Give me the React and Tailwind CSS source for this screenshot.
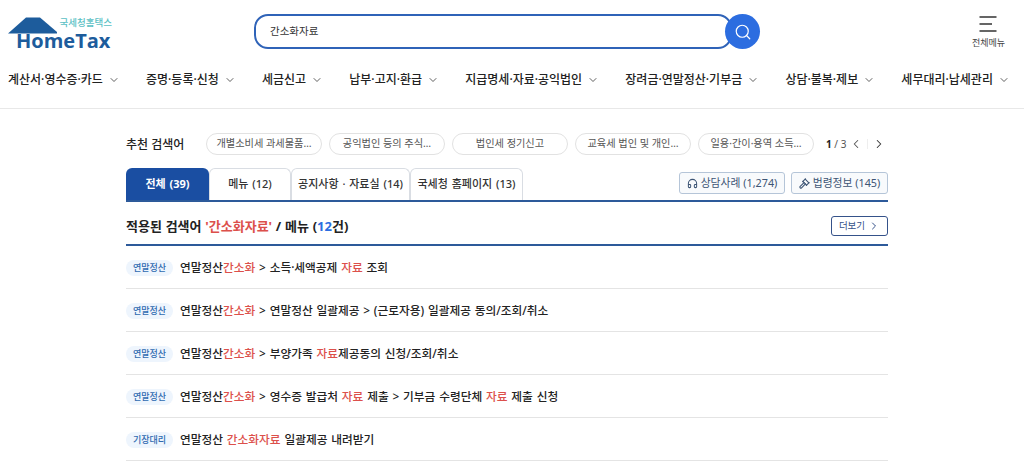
import React from "react";
import { ChevronDown, ChevronLeft, ChevronRight, Headphones, Gavel, Search } from "lucide-react";

const navItems = [
  "계산서·영수증·카드",
  "증명·등록·신청",
  "세금신고",
  "납부·고지·환급",
  "지급명세·자료·공익법인",
  "장려금·연말정산·기부금",
  "상담·불복·제보",
  "세무대리·납세관리",
];

const pills = [
  "개별소비세 과세물품…",
  "공익법인 등의 주식…",
  "법인세 정기신고",
  "교육세 법인 및 개인…",
  "일용·간이·용역 소득…",
];

const tabs = [
  { label: "전체 (39)", w: "w-[83px]", active: true },
  { label: "메뉴 (12)", w: "w-[82px]" },
  { label: "공지사항 · 자료실 (14)", w: "w-[119px]" },
  { label: "국세청 홈페이지 (13)", w: "w-[113px]" },
];

const R = ({ children }) => <span className="text-[#dc504b]">{children}</span>;

const rows = [
  { tag: "연말정산", body: <>연말정산<R>간소화</R> &gt; 소득·세액공제 <R>자료</R> 조회</> },
  { tag: "연말정산", body: <>연말정산<R>간소화</R> &gt; 연말정산 일괄제공 &gt; (근로자용) 일괄제공 동의/조회/취소</> },
  { tag: "연말정산", body: <>연말정산<R>간소화</R> &gt; 부양가족 <R>자료</R>제공동의 신청/조회/취소</> },
  { tag: "연말정산", body: <>연말정산<R>간소화</R> &gt; 영수증 발급처 <R>자료</R> 제출 &gt; 기부금 수령단체 <R>자료</R> 제출 신청</> },
  { tag: "기장대리", body: <>연말정산 <R>간소화자료</R> 일괄제공 내려받기</> },
];

function Logo() {
  return (
    <div className="relative w-[104px] h-[36px]">
      <svg className="absolute left-0 top-0" width="58" height="24" viewBox="0 0 58 24">
        <path d="M0 16.5 L18 0.5 H32 L49 15 V16.5 Z" fill="#1d5c9c" />
      </svg>
      <span className="absolute right-0 top-[0px] text-[9.5px] leading-[12px] font-medium text-[#5bbfc4]">국세청홈택스</span>
      <span className="absolute left-[8px] top-[12px] text-[20px] leading-[23px] font-bold text-[#1d5c9c] font-['Open_Sans',sans-serif]">HomeTax</span>
    </div>
  );
}

export default function App() {
  return (
    <div className="w-[1024px] h-[471px] overflow-hidden bg-white text-[#222] font-['Noto_Sans','Noto_Sans_CJK_KR',sans-serif]">
      <header className="h-[109px] border-b border-[#e8e8e8]">
        <div className="flex items-start h-[62px]">
          <div className="pl-[8px] pt-[17px] w-[254px]">
            <Logo />
          </div>
          <div className="mt-[14px] flex items-center">
            <div className="w-[478px] h-[35px] border-[2px] border-[#2f63b8] rounded-[14px] flex items-center pl-[14px] pt-[1px] text-[10.5px] text-[#333]">
              간소화자료
            </div>
            <button className="w-[35px] h-[35px] -ml-[7px] rounded-full bg-[#2c6de0] flex items-center justify-center">
              <Search size={18} color="#fff" strokeWidth={1.6} />
            </button>
          </div>
          <div className="ml-auto mr-[19px] pt-[16px] flex flex-col items-center">
            <svg width="18" height="16" viewBox="0 0 18 16">
              <path d="M0.5 1H17.5M0.5 8H13M0.5 15H17.5" stroke="#333" strokeWidth="1.3" fill="none" />
            </svg>
            <span className="mt-[5px] text-[9px] leading-[12px] text-[#444]">전체메뉴</span>
          </div>
        </div>
        <nav className="flex justify-between items-center pl-[8px] pr-[14px] h-[36px]">
          {navItems.map((item) => (
            <div key={item} className="flex items-center gap-[5px] text-[12px] font-medium text-[#222]">
              {item}
              <ChevronDown size={12} color="#444" strokeWidth={1.7} />
            </div>
          ))}
        </nav>
      </header>

      <main className="w-[762px] ml-[126px]">
        <div className="flex items-center h-[22px] mt-[24px]">
          <span className="w-[80px] pt-[1px] text-[12px] font-medium text-[#222]">추천 검색어</span>
          <div className="flex gap-[7px]">
            {pills.map((p) => (
              <div key={p} className="w-[116px] h-[22px] rounded-full border border-[#e2e2e2] flex items-center justify-center text-[10.2px] text-[#555]">
                {p}
              </div>
            ))}
          </div>
          <span className="ml-[12px] text-[10px] text-[#555]"><b className="font-bold text-[#222]">1</b> / 3</span>
          <ChevronLeft className="ml-[3px]" size={14} color="#555" strokeWidth={1.8} />
          <span className="mx-[4px] w-px h-[10px] bg-[#eee]" />
          <ChevronRight size={14} color="#333" strokeWidth={1.8} />
        </div>

        <div className="flex items-end h-[32px] mt-[13px] border-b-[2px] border-[#2d5a9a] box-content">
          {tabs.map((t) => (
            <div
              key={t.label}
              className={
                t.active
                  ? `${t.w} h-[32px] rounded-t-[6px] bg-[#1a4ea2] flex items-center justify-center text-[11px] font-bold text-white [word-spacing:1px]`
                  : `${t.w} h-[32px] rounded-t-[6px] border border-b-0 border-[#d9dde3] flex items-center justify-center text-[11px] font-medium text-[#333] [word-spacing:1px]`
              }
            >
              {t.label}
            </div>
          ))}
          <div className="ml-auto mb-[6px] flex gap-[6px]">
            <div className="w-[106px] h-[22px] rounded-[3px] border border-[#b5c5d8] bg-[#f8fafc] flex items-center justify-center gap-[3px] text-[10.8px] text-[#3d5575]">
              <Headphones size={11} color="#3d5575" strokeWidth={2.2} />
              상담사례 (1,274)
            </div>
            <div className="w-[97px] h-[22px] rounded-[3px] border border-[#b5c5d8] bg-[#f8fafc] flex items-center justify-center gap-[3px] text-[10.8px] text-[#3d5575]">
              <Gavel size={11} color="#3d5575" strokeWidth={2.4} />
              법령정보 (145)
            </div>
          </div>
        </div>

        <div className="flex items-center justify-between h-[36px] pt-[6px] border-b-[2px] border-[#2d5a9a] box-content">
          <h2 className="mt-[1px] text-[13px] font-bold text-[#222] [word-spacing:0.4px]">
            적용된 검색어 <R>'간소화자료'</R> / 메뉴 (<span className="text-[#2c6de0]">12</span>건)
          </h2>
          <div className="w-[57px] h-[20px] rounded-[3px] border border-[#35528a] flex items-center justify-center gap-[3px] text-[9.5px] text-[#35528a]">
            더보기
            <ChevronRight size={12} color="#35528a" strokeWidth={2} />
          </div>
        </div>

        {rows.map((r, i) => (
          <div key={i} className="flex items-center h-[43px] pt-[2px] border-b border-[#e4e4e4]">
            <span className="w-[47px] h-[16px] rounded-full bg-[#eef5fd] flex items-center justify-center text-[9px] font-medium text-[#2f6ab0]">
              {r.tag}
            </span>
            <span className="ml-[7px] text-[11.7px] font-medium text-[#222] [word-spacing:0.8px]">{r.body}</span>
          </div>
        ))}
      </main>
    </div>
  );
}
